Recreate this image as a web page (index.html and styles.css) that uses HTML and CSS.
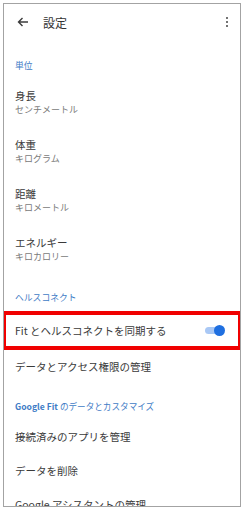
FILE: index.html
```html
<!DOCTYPE html>
<html lang="ja">
<head>
<meta charset="utf-8">
<link rel="stylesheet" href="styles.css">
</head>
<body>
<div class="frame">
  <header class="appbar">
    <svg class="back" width="12" height="10" viewBox="0 0 12 10"><path d="M11 5H1.5M5.5 1L1.5 5l4 4" fill="none" stroke="#3c3c3c" stroke-width="1.4"/></svg>
    <span class="title">設定</span>
    <span class="dots"><i></i><i></i><i></i></span>
  </header>

  <div class="label label-first">単位</div>
  <div class="item"><div class="t">身長</div><div class="s">センチメートル</div></div>
  <div class="item"><div class="t">体重</div><div class="s">キログラム</div></div>
  <div class="item"><div class="t">距離</div><div class="s">キロメートル</div></div>
  <div class="item"><div class="t">エネルギー</div><div class="s">キロカロリー</div></div>

  <div class="label label-hc">ヘルスコネクト</div>
  <div class="row row-sync">
    <span class="t">Fit とヘルスコネクトを同期する</span>
    <span class="toggle"><span class="track"></span><span class="knob"></span></span>
  </div>
  <div class="row row-access"><span class="t">データとアクセス権限の管理</span></div>

  <div class="label label-gf"><b>Google Fit</b> のデータとカスタマイズ</div>
  <div class="row row-std"><span class="t">接続済みのアプリを管理</span></div>
  <div class="row row-std"><span class="t">データを削除</span></div>
  <div class="row row-std"><span class="t">Google アシスタントの管理</span></div>
</div>
</body>
</html>
```

FILE: styles.css
```css
* { box-sizing: border-box; margin: 0; padding: 0; }
html, body { width: 247px; height: 510px; background: #fff; overflow: hidden; }
body {
  font-family: "Noto Sans CJK JP", "Noto Sans", "Liberation Sans", sans-serif;
  color: #3a3a3a;
}
.frame {
  position: relative;
  margin: 3px 0 0 3px;
  width: 238px;
  height: 504px;
  border: 1px solid #a3a3a3;
  overflow: hidden;
}
.appbar {
  height: 36px;
  display: flex;
  align-items: center;
  padding-left: 13px;
  padding-right: 10px;
}
.back { flex: none; }
.title {
  margin-left: 14px;
  font-size: 12px;
  color: #333;
  flex: 1;
}
.dots {
  display: flex;
  flex-direction: column;
  gap: 1.5px;
  margin-right: 2px;
}
.dots i {
  display: block;
  width: 2.5px;
  height: 2.5px;
  border-radius: 50%;
  background: #444;
}
.label {
  font-size: 8.8px;
  line-height: 14px;
  color: #3f7cc6;
  padding-left: 11px;
}
.label b { font-weight: 700; }
.label-first { padding-top: 19px; padding-bottom: 5px; }
.label-hc { padding-top: 17px; padding-bottom: 6px; }
.label-gf { padding-top: 17px; padding-bottom: 6px; font-size: 8.6px; }
.item {
  height: 49px;
  padding: 11px 0 0 11px;
}
.item .t { font-size: 10.5px; line-height: 14px; color: #3a3a3a; }
.item .s { font-size: 9px; line-height: 14px; color: #7a7a7a; }
.row {
  display: flex;
  align-items: center;
  padding-left: 11px;
  font-size: 10.5px;
  color: #3a3a3a;
}
.row-sync { position: relative; height: 39px; }
.row-sync::after {
  content: "";
  position: absolute;
  left: -2px;
  right: -2px;
  top: 0;
  bottom: 0;
  border: 4px solid #f00000;
}
.row-access { height: 32px; }
.row-std { height: 34px; }
.toggle {
  position: relative;
  margin-left: auto;
  margin-right: 15px;
  width: 20px;
  height: 11px;
  display: flex;
  align-items: center;
}
.track {
  display: block;
  width: 19px;
  height: 7px;
  border-radius: 4px;
  background: #a9c8f5;
}
.knob {
  position: absolute;
  right: 0;
  top: 0;
  width: 11px;
  height: 11px;
  border-radius: 50%;
  background: #1f6fe0;
}
```
